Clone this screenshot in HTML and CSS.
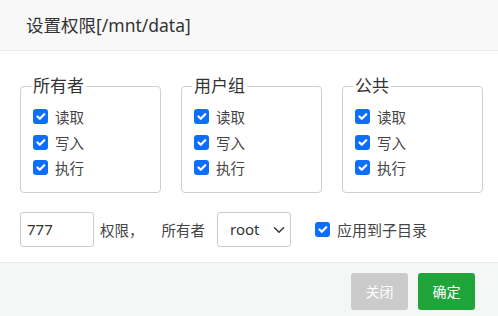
FILE: index.html
```html
<!DOCTYPE html>
<html lang="zh">
<head>
<meta charset="utf-8">
<title>设置权限</title>
<link rel="stylesheet" href="styles.css">
</head>
<body>
<div class="dialog">
  <div class="dlg-head">设置权限[/mnt/data]</div>
  <div class="dlg-body">
    <div class="groups">
      <fieldset class="grp">
        <legend>所有者</legend>
        <label class="opt"><span class="cb"><svg viewBox="0 0 20 20"><path d="m6 10 3 3 6-6"/></svg></span>读取</label>
        <label class="opt"><span class="cb"><svg viewBox="0 0 20 20"><path d="m6 10 3 3 6-6"/></svg></span>写入</label>
        <label class="opt"><span class="cb"><svg viewBox="0 0 20 20"><path d="m6 10 3 3 6-6"/></svg></span>执行</label>
      </fieldset>
      <fieldset class="grp">
        <legend>用户组</legend>
        <label class="opt"><span class="cb"><svg viewBox="0 0 20 20"><path d="m6 10 3 3 6-6"/></svg></span>读取</label>
        <label class="opt"><span class="cb"><svg viewBox="0 0 20 20"><path d="m6 10 3 3 6-6"/></svg></span>写入</label>
        <label class="opt"><span class="cb"><svg viewBox="0 0 20 20"><path d="m6 10 3 3 6-6"/></svg></span>执行</label>
      </fieldset>
      <fieldset class="grp">
        <legend>公共</legend>
        <label class="opt"><span class="cb"><svg viewBox="0 0 20 20"><path d="m6 10 3 3 6-6"/></svg></span>读取</label>
        <label class="opt"><span class="cb"><svg viewBox="0 0 20 20"><path d="m6 10 3 3 6-6"/></svg></span>写入</label>
        <label class="opt"><span class="cb"><svg viewBox="0 0 20 20"><path d="m6 10 3 3 6-6"/></svg></span>执行</label>
      </fieldset>
    </div>
    <div class="ctrl-row">
      <input class="num" type="text" value="777">
      <span class="txt">权限，</span>
      <span class="txt owner-lbl">所有者</span>
      <span class="sel-wrap">
        <select class="sel"><option>root</option></select>
        <svg class="chev" viewBox="0 0 16 16"><path d="m2 5 6 6 6-6"/></svg>
      </span>
      <label class="opt sub"><span class="cb"><svg viewBox="0 0 20 20"><path d="m6 10 3 3 6-6"/></svg></span>应用到子目录</label>
    </div>
  </div>
  <div class="dlg-foot">
    <button class="btn btn-close">关闭</button>
    <button class="btn btn-ok">确定</button>
  </div>
</div>
</body>
</html>
```
FILE: styles.css
```css
html, body {
  margin: 0;
  padding: 0;
  background: #fff;
}
body {
  font-family: "Noto Sans", "Noto Sans CJK SC", sans-serif;
  color: #333;
  width: 498px;
  height: 316px;
  overflow: hidden;
}
.dialog {
  display: flex;
  flex-direction: column;
  height: 316px;
}
.dlg-head {
  height: 50px;
  line-height: 50px;
  padding-left: 26px;
  font-size: 17.5px;
  color: #333;
  background: #f8f8f8;
  border-bottom: 1px solid #eaeaea;
}
.dlg-body {
  padding: 25px 15px 15px 20px;
}
.groups {
  display: grid;
  grid-template-columns: repeat(3, 1fr);
  gap: 20px;
}
.grp {
  margin: 0;
  padding: 8px 10px 11px 12px;
  border: 1px solid #cfcfcf;
  border-radius: 4px;
  min-width: 0;
}
.grp legend {
  font-size: 17px;
  line-height: 20px;
  padding: 0 2px;
  margin-left: -2px;
  color: #333;
}
.opt {
  display: flex;
  align-items: center;
  height: 25.5px;
  font-size: 14.5px;
  color: #444;
}
.cb {
  width: 15px;
  height: 15px;
  border-radius: 3px;
  background: #0d6efd;
  margin-right: 7px;
  display: inline-flex;
  flex: none;
}
.cb svg {
  width: 15px;
  height: 15px;
  fill: none;
  stroke: #fff;
  stroke-width: 3;
  stroke-linecap: round;
  stroke-linejoin: round;
}
.ctrl-row {
  display: flex;
  align-items: center;
  margin-top: 19px;
  height: 35px;
}
.num {
  box-sizing: border-box;
  width: 74px;
  height: 35px;
  border: 1px solid #ccc;
  border-radius: 3px;
  padding: 0 6px;
  font-family: inherit;
  font-size: 15px;
  color: #333;
  outline: none;
}
.txt {
  font-size: 14.5px;
  color: #444;
}
.num + .txt {
  margin-left: 6px;
}
.owner-lbl {
  margin-left: 18px;
}
.sel-wrap {
  position: relative;
  margin-left: 12px;
  display: inline-flex;
}
.sel {
  box-sizing: border-box;
  width: 74px;
  height: 35px;
  border: 1px solid #ccc;
  border-radius: 3px;
  padding: 0 0 0 12px;
  font-family: inherit;
  font-size: 15px;
  color: #333;
  background: #fff;
  appearance: none;
  -webkit-appearance: none;
  outline: none;
}
.chev {
  position: absolute;
  right: 6px;
  top: 12px;
  width: 12px;
  height: 12px;
  fill: none;
  stroke: #343a40;
  stroke-width: 2;
  stroke-linecap: round;
  stroke-linejoin: round;
  pointer-events: none;
}
.opt.sub {
  margin-left: 24px;
  font-size: 15px;
  height: 35px;
}
.dlg-foot {
  flex: 1;
  background: #f5f6f6;
  border-top: 1px solid #ebebeb;
  display: flex;
  justify-content: flex-end;
  align-items: flex-start;
  gap: 10px;
  padding: 10px 23px 0 0;
}
.btn {
  width: 57px;
  height: 37px;
  border: 0;
  border-radius: 3px;
  color: #fff;
  font-family: inherit;
  font-size: 14px;
  padding: 0;
}
.btn-close {
  background: #cbcbcb;
}
.btn-ok {
  background: #20a53a;
}
```
